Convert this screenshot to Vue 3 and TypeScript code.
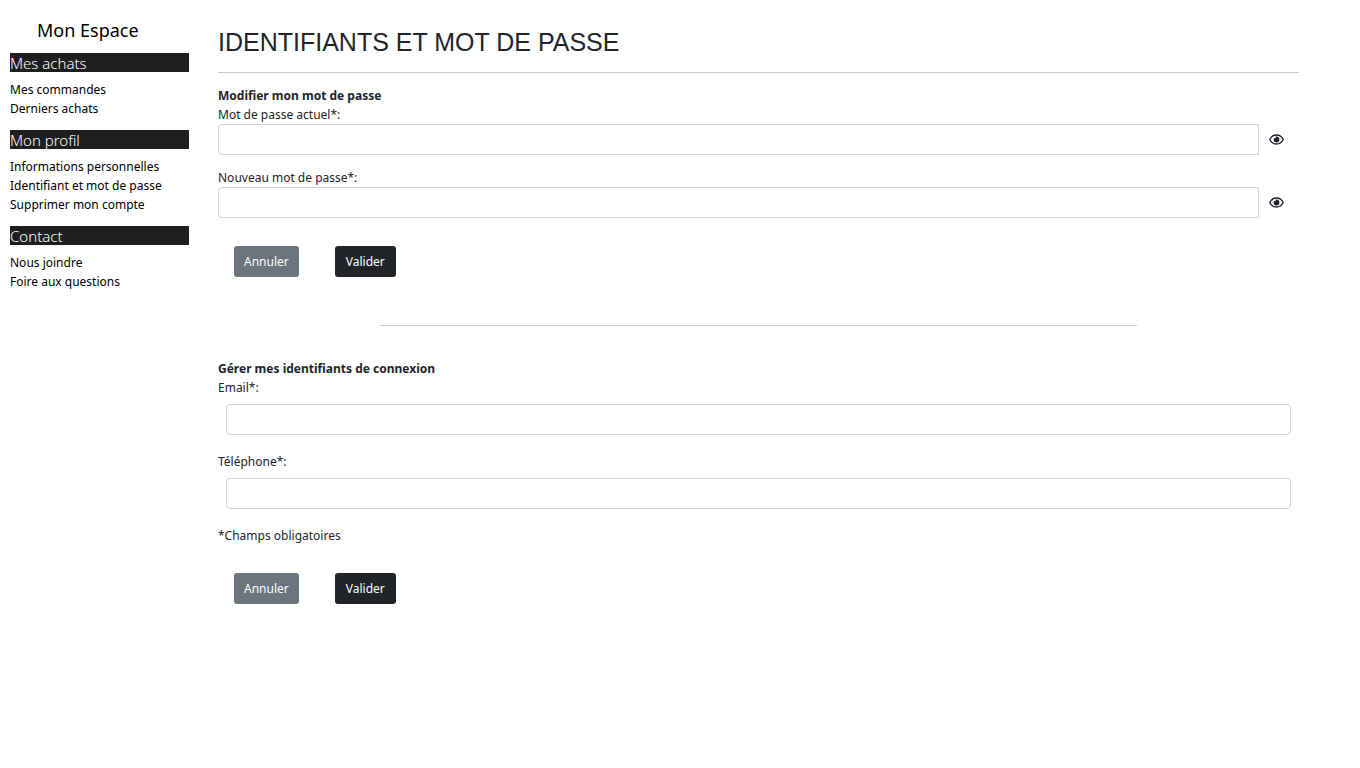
<script setup lang="ts">
import { reactive } from 'vue'

interface MenuGroup {
  title: string
  links: string[]
}

interface PasswordField {
  id: string
  label: string
  value: string
  visible: boolean
}

interface ContactField {
  id: string
  label: string
  type: string
  value: string
}

const menu: MenuGroup[] = [
  { title: 'Mes achats', links: ['Mes commandes', 'Derniers achats'] },
  {
    title: 'Mon profil',
    links: ['Informations personnelles', 'Identifiant et mot de passe', 'Supprimer mon compte'],
  },
  { title: 'Contact', links: ['Nous joindre', 'Foire aux questions'] },
]

const passwords = reactive<PasswordField[]>([
  { id: 'current-password', label: 'Mot de passe actuel*:', value: '', visible: false },
  { id: 'new-password', label: 'Nouveau mot de passe*:', value: '', visible: false },
])

const contacts = reactive<ContactField[]>([
  { id: 'email', label: 'Email*:', type: 'email', value: '' },
  { id: 'phone', label: 'Téléphone*:', type: 'tel', value: '' },
])

function clear(fields: { value: string }[]): void {
  fields.forEach((field) => {
    field.value = ''
  })
}
</script>

<template>
  <div class="page">
    <nav class="sidebar" aria-label="Mon Espace">
      <p class="space-title">Mon Espace</p>
      <section v-for="group in menu" :key="group.title" class="group">
        <h2 class="group-title">{{ group.title }}</h2>
        <ul class="links">
          <li v-for="link in group.links" :key="link"><a href="#">{{ link }}</a></li>
        </ul>
      </section>
    </nav>

    <main class="content">
      <h1 class="title">IDENTIFIANTS ET MOT DE PASSE</h1>
      <hr class="rule" />

      <form class="passwords" @submit.prevent>
        <h2 class="form-title">Modifier mon mot de passe</h2>
        <div v-for="field in passwords" :key="field.id" class="password-field">
          <label :for="field.id">{{ field.label }}</label>
          <div class="input-row">
            <input
              :id="field.id"
              v-model="field.value"
              class="input joined"
              :type="field.visible ? 'text' : 'password'"
            />
            <button
              class="reveal"
              type="button"
              aria-label="Afficher le mot de passe"
              @click="field.visible = !field.visible"
            >
              <svg width="15" height="11" viewBox="0 0 15 11" aria-hidden="true">
                <path
                  d="M.7 5.500C2.200 2.600 4.600 1 7.500 1s5.300 1.600 6.800 4.500C12.800 8.400 10.400 10 7.500 10S2.200 8.400.7 5.500Z"
                  fill="none"
                  stroke="currentColor"
                  stroke-width="1.300"
                />
                <path
                  d="M7.500 2.600a2.900 2.900 0 1 1-2.900 2.900c0-.5.1-.9.3-1.300.8.5 2.100-.1 1.800-1.500.3-.1.500-.1.8-.1Z"
                  fill="currentColor"
                />
              </svg>
            </button>
          </div>
        </div>
        <div class="actions">
          <button class="btn secondary" type="button" @click="clear(passwords)">Annuler</button>
          <button class="btn dark" type="submit">Valider</button>
        </div>
      </form>

      <hr class="rule short" />

      <form class="contacts" @submit.prevent>
        <h2 class="form-title">Gérer mes identifiants de connexion</h2>
        <div v-for="field in contacts" :key="field.id" class="contact-field">
          <label :for="field.id">{{ field.label }}</label>
          <input :id="field.id" v-model="field.value" class="input" :type="field.type" />
        </div>
        <p class="note">*Champs obligatoires</p>
        <div class="actions">
          <button class="btn secondary" type="button" @click="clear(contacts)">Annuler</button>
          <button class="btn dark" type="submit">Valider</button>
        </div>
      </form>
    </main>
  </div>
</template>

<style>
body {
  margin: 0;
  background: #fff;
}
</style>

<style scoped>
* {
  box-sizing: border-box;
}

.page {
  display: flex;
  gap: 29px;
  padding: 15px 61px 40px 10px;
  font-family: "Noto Sans", sans-serif;
  font-size: 12px;
  line-height: 19px;
  color: #212529;
}

h1,
h2,
p,
ul {
  margin: 0;
  padding: 0;
}

.sidebar {
  flex: 0 0 179px;
  color: #000;
}

.space-title {
  padding: 0 27px;
  margin-bottom: 8px;
  font-size: 18px;
  line-height: 30px;
}

.group {
  margin-bottom: 12px;
}

.group-title {
  padding-top: 2px;
  margin-bottom: 8px;
  background: #1e1e1e;
  color: #fff;
  font-size: 15px;
  font-weight: 300;
  line-height: 17px;
}

.links {
  list-style: none;
}

.links a {
  color: #000;
  text-decoration: none;
}

.content {
  flex: 1;
  min-width: 0;
}

.title {
  padding-top: 12px;
  font-family: "Liberation Sans", Arial, sans-serif;
  font-size: 25px;
  font-weight: 300;
  line-height: 30px;
}

.rule {
  height: 1px;
  margin: 15px 0 13px;
  border: 0;
  background: #c8c9ca;
}

.rule.short {
  width: 70%;
  margin: 48px auto 33px;
}

.form-title {
  font-size: 12px;
  font-weight: 700;
  line-height: 19px;
}

label {
  display: block;
}

.password-field {
  margin-bottom: 13px;
}

.input-row {
  display: flex;
}

.input {
  display: block;
  min-width: 0;
  height: 31px;
  padding: 4px 8px;
  border: 1px solid #ced4da;
  border-radius: 4px;
  background: #fff;
  color: #212529;
  font: inherit;
}

.joined {
  flex: 1;
  border-radius: 4px 0 0 4px;
}

.reveal {
  display: flex;
  align-items: center;
  justify-content: center;
  width: 40px;
  padding: 0 5px 0 0;
  border: 0;
  background: none;
  color: #212529;
}

.contact-field {
  margin-bottom: 17px;
}

.contact-field .input {
  width: calc(100% - 16px);
  margin: 7px 8px 0;
}

.actions {
  display: flex;
  gap: 36px;
  padding: 28px 16px 0;
}

.passwords .actions {
  padding-top: 15px;
}

.btn {
  min-width: 61px;
  height: 31px;
  padding: 0 10px;
  border: 0;
  border-radius: 3px;
  color: #fff;
  font: inherit;
}

.secondary {
  background: #6c757d;
}

.dark {
  background: #212529;
}
</style>
